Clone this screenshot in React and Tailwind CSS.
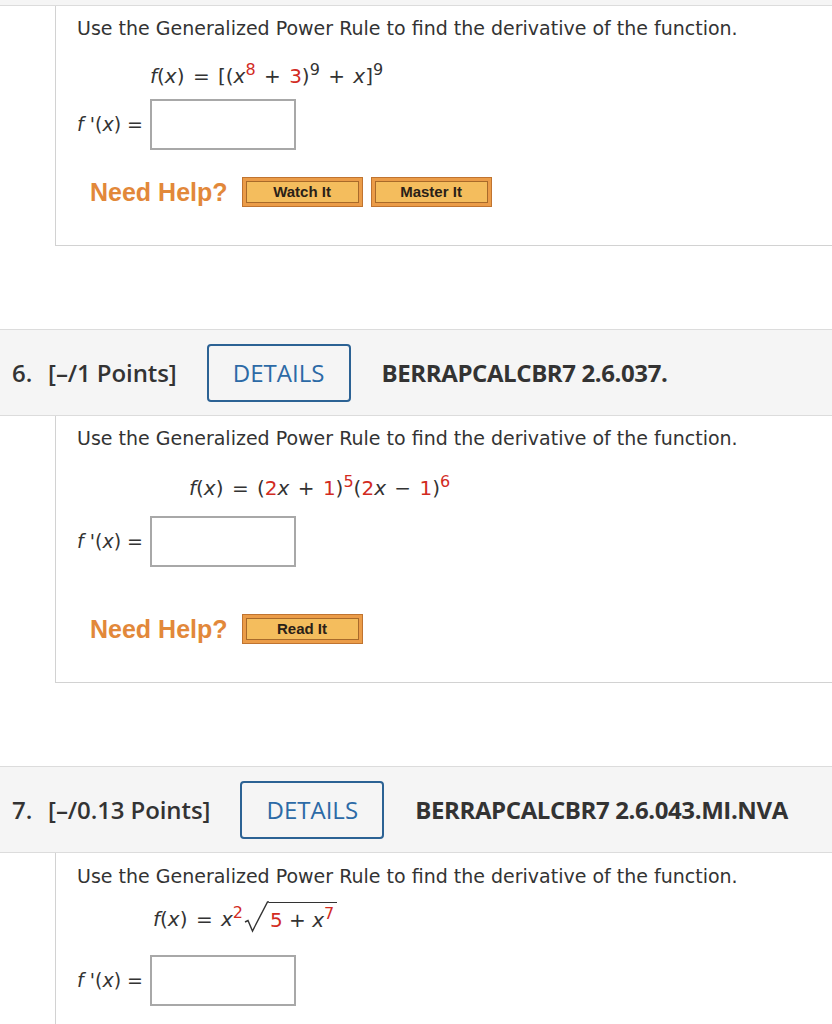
import React from 'react';

const red = 'text-[#d22b1f]';
const body = "font-['DejaVu_Sans',Verdana,sans-serif]";

const Sup = ({ children, className = '' }) => (
  <sup className={`text-[16px] ${className}`}>{children}</sup>
);

// binary operator with a little extra room, like the math renderer
const Op = ({ children }) => <span className="mx-[2px]">{children}</span>;

const HelpButton = ({ label }) => (
  <div className="w-[121px] h-[30px] border border-[#c07430] bg-[#eb9c48] p-[3px]">
    <div className="h-full border border-[#a86a2a] bg-[#f4bd5d] flex items-center justify-center text-[15px] font-bold text-[#2a2118] font-['Liberation_Sans',Arial,sans-serif]">
      {label}
    </div>
  </div>
);

const NeedHelp = ({ buttons, className = '' }) => (
  <div className={`flex items-center ${className}`}>
    <span className="ml-[13px] mr-[14px] text-[25px] leading-none font-bold text-[#e2883a] font-['Liberation_Sans',Arial,sans-serif]">
      Need Help?
    </span>
    <div className="flex gap-[8px]">
      {buttons.map((b) => (
        <HelpButton key={b} label={b} />
      ))}
    </div>
  </div>
);

const Answer = ({ className = '' }) => (
  <div className={`flex items-center ${className}`}>
    <span className="w-[73px] text-[19px] leading-none text-[#333]">
      <i>f</i> '(<i>x</i>) =
    </span>
    <div className="w-[146px] h-[51px] border-2 border-[#a8a8a8] bg-white" />
  </div>
);

const Prompt = ({ className = '' }) => (
  <p className={`text-[19px] leading-[24px] text-[#333] ${className}`}>
    Use the Generalized Power Rule to find the derivative of the function.
  </p>
);

const Header = ({ num, points, code }) => (
  <div className="h-[87px] bg-[#f5f5f5] border-y border-[#dcdcdc] flex items-center pl-[12px] font-['Open_Sans',sans-serif] text-[24px] font-semibold text-[#333] tracking-[-0.1px]">
    <span>{num}.</span>
    <span className="ml-[16px]">[–/{points} Points]</span>
    <div className="ml-[30px] w-[144px] h-[58px] border-2 border-[#2c6294] rounded-[4px] flex items-center justify-center text-[#2c6aa6] font-normal tracking-normal">
      DETAILS
    </div>
    <span className="ml-[31px] font-bold tracking-[-0.4px]">{code}</span>
  </div>
);

const Body = ({ children }) => (
  <div className={`ml-[55px] border-l border-b border-[#d2d2d2] pl-[21px] ${body}`}>{children}</div>
);

export default function App() {
  return (
    <div className={`w-[832px] h-[1024px] overflow-hidden bg-white ${body}`}>
      <div className="h-[6px] bg-[#f5f5f5] border-b border-[#dcdcdc]" />

      {/* Question 5 (tail) */}
      <Body>
        <Prompt className="pt-[10px]" />
        <div className="mt-[21px] ml-[73px] h-[30px] leading-[30px] text-[20px] text-[#333] whitespace-pre">
          <i>f</i>(<i>x</i>) <Op>=</Op> [(<i>x</i>
          <Sup className={red}>8</Sup> <Op>+</Op> <span className={red}>3</span>)<Sup>9</Sup> <Op>+</Op> <i>x</i>]
          <Sup>9</Sup>
        </div>
        <Answer className="mt-[8px]" />
        <NeedHelp className="mt-[27px] pb-[38px]" buttons={['Watch It', 'Master It']} />
      </Body>

      <div className="h-[83px]" />

      {/* Question 6 */}
      <Header num="6" points="1" code="BERRAPCALCBR7 2.6.037." />
      <Body>
        <Prompt className="pt-[10px]" />
        <div className="mt-[23px] ml-[112px] h-[30px] leading-[30px] text-[20px] text-[#333] whitespace-pre">
          <i>f</i>(<i>x</i>) <Op>=</Op> (<span className={red}>2</span><i>x</i> <Op>+</Op> <span className={red}>1</span>)
          <Sup className={red}>5</Sup>(<span className={red}>2</span><i>x</i> <Op>−</Op> <span className={red}>1</span>)
          <Sup className={red}>6</Sup>
        </div>
        <Answer className="mt-[13px]" />
        <NeedHelp className="mt-[47px] pb-[38px]" buttons={['Read It']} />
      </Body>

      <div className="h-[83px]" />

      {/* Question 7 */}
      <Header num="7" points="0.13" code="BERRAPCALCBR7 2.6.043.MI.NVA" />
      <Body>
        <Prompt className="pt-[11px]" />
        <div className="mt-[9px] ml-[76px] h-[36px] flex items-end text-[20px] text-[#333] whitespace-pre">
          <span className="leading-[28px]">
            <i>f</i>(<i>x</i>) <Op>=</Op> <i>x</i>
            <Sup className={red}>2</Sup>
          </span>
          <svg width="26" height="32" viewBox="0 0 26 32" className="shrink-0">
            <path d="M2 21 L5 19.5 L9.5 30 L24.5 1 L26 1" fill="none" stroke="#333" strokeWidth="1.4" />
          </svg>
          <span className="border-t-[1.5px] border-[#333] pt-[4px] pl-[1px] pr-[3px] leading-[26px]">
            <span className={red}>5</span> + <i>x</i>
            <Sup className={red}>7</Sup>
          </span>
        </div>
        <Answer className="mt-[22px]" />
        <div className="h-[60px]" />
      </Body>
    </div>
  );
}
